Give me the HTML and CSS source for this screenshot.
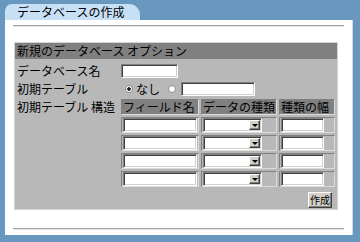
FILE: index.html
```html
<!DOCTYPE html>
<html lang="ja">
	<head>
		<meta charset="UTF-8" />
		<meta name="viewport" content="width=device-width, initial-scale=1.0" />
		<title>データベースの作成</title>
		<link rel="stylesheet" href="styles.css">
	</head>
	<body>
		<div class="window">
			<div class="tab">データベースの作成</div>
			<div class="panel">
				<hr class="rule" />

				<form class="options">
					<div class="options-title">新規のデータベース オプション</div>

					<div class="form-row first">
						<label class="label" for="db_name">データベース名</label>
						<div class="field">
							<input type="text" id="db_name" class="text name" />
						</div>
					</div>

					<div class="form-row">
						<span class="label">初期テーブル</span>
						<div class="field">
							<input type="radio" name="init" id="init_none" class="radio" checked />
							<label for="init_none" class="radio-text">なし</label>
							<input type="radio" name="init" id="init_table" class="radio" />
							<input type="text" class="text table-name" />
						</div>
					</div>

					<div class="form-row top">
						<span class="label structure">初期テーブル 構造</span>
						<div class="field">
							<table class="fields">
								<tr>
									<th class="col-name">フィールド名</th>
									<th class="col-type">データの種類</th>
									<th class="col-width">種類の幅</th>
								</tr>
								<tr>
									<td><input type="text" class="text cell-name" /></td>
									<td><span class="combo"><select></select><span class="combo-btn"></span></span></td>
									<td><input type="text" class="text cell-width" /></td>
								</tr>
								<tr>
									<td><input type="text" class="text cell-name" /></td>
									<td><span class="combo"><select></select><span class="combo-btn"></span></span></td>
									<td><input type="text" class="text cell-width" /></td>
								</tr>
								<tr>
									<td><input type="text" class="text cell-name" /></td>
									<td><span class="combo"><select></select><span class="combo-btn"></span></span></td>
									<td><input type="text" class="text cell-width" /></td>
								</tr>
								<tr>
									<td><input type="text" class="text cell-name" /></td>
									<td><span class="combo"><select></select><span class="combo-btn"></span></span></td>
									<td><input type="text" class="text cell-width" /></td>
								</tr>
							</table>
						</div>
					</div>

					<div class="actions">
						<button type="submit" class="btn">作成</button>
					</div>
				</form>

				<hr class="rule bottom" />
			</div>
		</div>
	</body>
</html>
```

FILE: styles.css
```css
body {
	margin: 0;
	background-color: #6898c0;
	font-family: "Noto Sans CJK JP", "Noto Sans", sans-serif;
	font-size: 12px;
	color: #000;
}
.window {
	padding: 4px 0 0 5px;
	width: 348px;
}
.tab {
	width: 123px;
	height: 16px;
	line-height: 16px;
	padding-left: 12px;
	background-color: #c8e0f6;
	border-radius: 7px 11px 0 0;
	font-size: 12px;
}
.panel {
	box-sizing: border-box;
	height: 215px;
	padding: 5px 8px 0 8px;
	background: #fff;
	border-right: 1px solid #d8d8d8;
}
.rule {
	margin: 0;
	height: 0;
	border: 0;
	border-top: 1px solid #a4a4a4;
	border-bottom: 1px solid #e4e4e4;
}
.rule.bottom {
	margin-top: 18px;
}
.options {
	margin: 15px 6px 0 1px;
	padding: 0 0 1px 0;
	background-color: #b8b8b8;
	border: 1px solid #d4d4d4;
}
.options-title {
	height: 16px;
	line-height: 16px;
	padding-left: 2px;
	background-color: #808080;
	white-space: nowrap;
}
.form-row {
	display: grid;
	grid-template-columns: 102px 1fr;
	align-items: center;
	padding-left: 2px;
	height: 17px;
}
.form-row.first {
	margin-top: 2px;
	height: 19px;
}
.form-row.top {
	align-items: start;
	height: auto;
}
.label {
	line-height: 14px;
	white-space: nowrap;
}
.structure {
	padding-top: 3px;
}
.field {
	display: flex;
	align-items: center;
}
.text {
	box-sizing: border-box;
	height: 14px;
	margin: 0;
	padding: 0;
	background: #fff;
	border: 1px solid;
	border-color: #808080 #fff #fff #808080;
	box-shadow: inset 1px 1px #404040, inset -1px -1px #d4d0c8;
	font-size: 11px;
}
.name {
	width: 57px;
	margin-left: 2px;
}
.radio {
	appearance: none;
	box-sizing: border-box;
	width: 8px;
	height: 8px;
	margin: 0 0 0 6px;
	border: 1px solid #8c8c8c;
	border-radius: 50%;
	background: #fff;
}
.radio:checked {
	background: radial-gradient(circle, #202020 1.5px, #fff 2px);
}
.radio-text {
	margin-left: 3px;
	line-height: 14px;
}
.radio-text + .radio {
	margin-left: 8px;
}
.table-name {
	width: 74px;
	margin-left: 5px;
}
.fields {
	border-collapse: separate;
	border-spacing: 2px;
}
.fields th,
.fields td {
	box-sizing: border-box;
	padding: 0 1px;
	border: 1px solid;
	border-color: #808080 #dcdcdc #dcdcdc #808080;
	text-align: left;
	white-space: nowrap;
}
.fields th {
	height: 16px;
	line-height: 14px;
	font-weight: normal;
	background-color: #808080;
}
.fields td {
	height: 16px;
}
.col-name {
	width: 78px;
}
.col-type {
	width: 76px;
}
.col-width {
	width: 57px;
}
.cell-name {
	display: block;
	width: 74px;
}
.cell-width {
	display: block;
	width: 43px;
}
.combo {
	box-sizing: border-box;
	display: flex;
	width: 59px;
	height: 14px;
	padding: 1px;
	background: #fff;
	border: 1px solid;
	border-color: #808080 #fff #fff #808080;
	box-shadow: inset 1px 1px #404040, inset -1px -1px #d4d0c8;
}
.combo select {
	appearance: none;
	flex: 1;
	min-width: 0;
	margin: 0;
	padding: 0;
	border: 0;
	background: transparent;
}
.combo-btn {
	box-sizing: border-box;
	display: flex;
	align-items: center;
	justify-content: center;
	width: 11px;
	height: 10px;
	background-color: #d4d0c8;
	border: 1px solid;
	border-color: #fff #404040 #404040 #fff;
	box-shadow: inset -1px -1px #808080;
}
.combo-btn::after {
	content: "";
	border-left: 3px solid transparent;
	border-right: 3px solid transparent;
	border-top: 3px solid #000;
}
.actions {
	display: flex;
	justify-content: flex-end;
	padding: 3px 5px 0 0;
}
.btn {
	box-sizing: border-box;
	width: 24px;
	height: 16px;
	padding: 0;
	background-color: #d4d0c8;
	border: 1px solid;
	border-color: #fff #404040 #404040 #fff;
	box-shadow: inset -1px -1px #808080;
	font-family: inherit;
	font-size: 10px;
	line-height: 12px;
}
```
